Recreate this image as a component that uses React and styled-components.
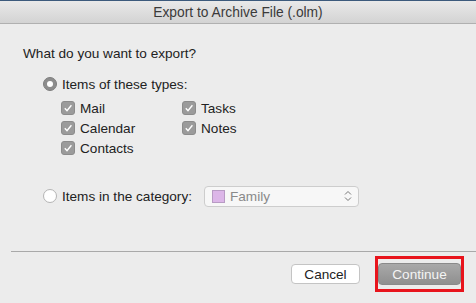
import React from "react";
import styled, { createGlobalStyle } from "styled-components";

const Global = createGlobalStyle`
  html, body { margin: 0; padding: 0; background: #ececec; }
  body { font-family: "Liberation Sans", Arial, sans-serif; font-size: 13.6px; color: #222; }
`;

const Window = styled.div`
  width: 476px;
  height: 303px;
  background: #ececec;
  display: flex;
  flex-direction: column;
  overflow: hidden;
`;

const TitleBar = styled.div`
  height: 22px;
  border-top: 1px solid #3c5a7c;
  border-bottom: 1px solid #b0b0b0;
  background: linear-gradient(#e9e9e9, #d3d3d3);
  display: flex;
  align-items: center;
  justify-content: center;
  color: #3a3a3a;
  font-size: 13.8px;
`;

const Body = styled.div`
  padding: 22px 0 0 23px;
  display: flex;
  flex-direction: column;
`;

const Heading = styled.div`
  height: 16px;
  line-height: 16px;
`;

const Options = styled.div`
  margin-left: 20px;
  margin-top: 12px;
  display: flex;
  flex-direction: column;
`;

const RadioRow = styled.div`
  display: flex;
  align-items: center;
  height: 20px;
  gap: 5px;
  margin-top: ${(p) => p.$top || 0}px;
`;

const Radio = styled.span`
  width: 14px;
  height: 14px;
  border-radius: 50%;
  box-sizing: border-box;
  display: flex;
  align-items: center;
  justify-content: center;
  background: ${(p) => (p.$on ? "#8d8d8d" : "#fff")};
  border: 1px solid ${(p) => (p.$on ? "#7e7e7e" : "#b4b4b4")};
  &::after {
    content: "";
    display: ${(p) => (p.$on ? "block" : "none")};
    width: 6px;
    height: 6px;
    border-radius: 50%;
    background: #fff;
  }
`;

const CheckGrid = styled.div`
  display: grid;
  grid-template-columns: 121px auto;
  grid-auto-flow: column;
  grid-template-rows: repeat(3, 20px);
  margin: 4px 0 0 18px;
`;

const CheckRow = styled.label`
  display: flex;
  align-items: center;
  gap: 5px;
`;

const Box = styled.span`
  width: 14px;
  height: 14px;
  box-sizing: border-box;
  border-radius: 3px;
  background: #9b9b9b;
  border: 1px solid #8c8c8c;
  display: flex;
  align-items: center;
  justify-content: center;
`;

const Select = styled.div`
  margin-left: 7px;
  width: 155px;
  height: 21px;
  box-sizing: border-box;
  border: 1px solid #cdcdcd;
  border-radius: 4px;
  background: #f7f7f7;
  display: flex;
  align-items: center;
  padding: 0 6px 0 7px;
  color: #8a8a8a;
  gap: 5px;
`;

const Swatch = styled.span`
  width: 13px;
  height: 13px;
  box-sizing: border-box;
  background: #dcb6e8;
  border: 1px solid #b89bc4;
`;

const Grow = styled.span`
  flex: 1;
`;

const Separator = styled.div`
  margin: 45px 0 0 11px;
  height: 1px;
  background: #a9a9a9;
`;

const Footer = styled.div`
  display: flex;
  justify-content: flex-end;
  align-items: center;
  padding: 4px 12px 0 0;
  gap: 15px;
`;

const Button = styled.button`
  font-family: inherit;
  font-size: 13.6px;
  height: 20px;
  box-sizing: border-box;
  border-radius: 4px;
  padding: 0;
  width: ${(p) => p.$w}px;
  background: #fff;
  border: 1px solid #c4c4c4;
  color: #222;
`;

const Highlight = styled.div`
  border: 3px solid #e8141c;
  padding: 4px 0;
  width: 89px;
  box-sizing: border-box;
  display: flex;
  justify-content: center;
`;

const Primary = styled(Button)`
  height: 22px;
  background: linear-gradient(#a9a9a9, #8f8f8f);
  border-color: #8a8a8a;
  color: #f4f4f4;
`;

const Check = () => (
  <svg width="10" height="10" viewBox="0 0 10 10">
    <path d="M1.8 5.2 L4 7.6 L8.4 2.2" fill="none" stroke="#fff" strokeWidth="1.4" />
  </svg>
);

const Item = ({ children }) => (
  <CheckRow>
    <Box>
      <Check />
    </Box>
    {children}
  </CheckRow>
);

export default function App() {
  return (
    <Window>
      <Global />
      <TitleBar>Export to Archive File (.olm)</TitleBar>
      <Body>
        <Heading>What do you want to export?</Heading>
        <Options>
          <RadioRow>
            <Radio $on />
            Items of these types:
          </RadioRow>
          <CheckGrid>
            <Item>Mail</Item>
            <Item>Calendar</Item>
            <Item>Contacts</Item>
            <Item>Tasks</Item>
            <Item>Notes</Item>
          </CheckGrid>
          <RadioRow $top={28}>
            <Radio />
            Items in the category:
            <Select>
              <Swatch />
              <Grow>Family</Grow>
              <svg width="8" height="12" viewBox="0 0 8 12">
                <path d="M1 4.5 L4 1.5 L7 4.5 M1 7.5 L4 10.5 L7 7.5" fill="none" stroke="#777" strokeWidth="1" />
              </svg>
            </Select>
          </RadioRow>
        </Options>
      </Body>
      <Separator />
      <Footer>
        <Button $w={69}>Cancel</Button>
        <Highlight>
          <Primary $w={83}>Continue</Primary>
        </Highlight>
      </Footer>
    </Window>
  );
}
